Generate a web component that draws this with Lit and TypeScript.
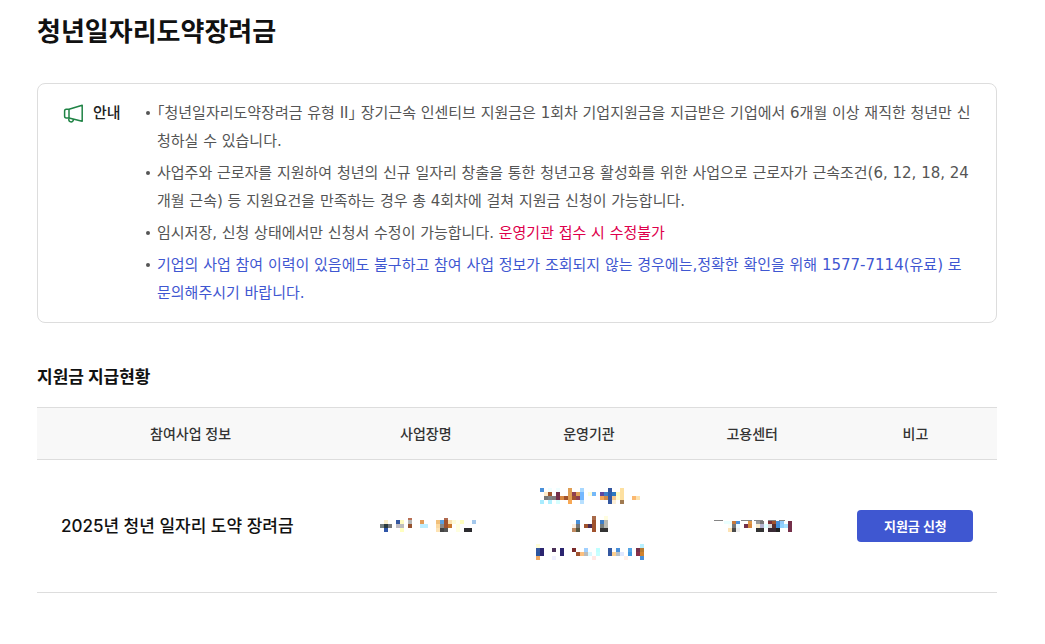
import { LitElement, html, svg, css } from "lit";
import { customElement, property } from "lit/decorators.js";

/** One strip of 4px tiles: top offset, tile height, then "column:colour" entries. */
type Strip = [top: number, height: number, tiles: string];

interface Mask {
  label: string;
  width: number;
  height: number;
  strips: Strip[];
  lines?: [x: number, width: number][];
}

const WORKPLACE: Mask = {
  label: "사업장명 비공개",
  width: 92,
  height: 22,
  strips: [
    [3, 3, "7:b87055 16:b06a50"],
    [5, 4, "1:fcefcb 4:3457a0 5:fdfbc0 7:b5b5b5 10:e09a57 14:f2c07a 15:5b9fe0 16:a0522d 17:fbe0b0 18:fdfbd8 19:fffff0 20:ffffc0 23:a4c8ec"],
    [9, 4, "0:777f7f 1:2b3a3f 2:777777 4:bdb9c0 5:bdbdbd 7:96532f 10:bdeeff 11:bdeeff 14:fbd9a0 15:888888 16:a0522d 17:c8772b 19:ffffe0"],
    [13, 4, "1:2f56a8 5:ffffc0 14:fde3b5 15:444444 16:555555 19:ffffe0 21:2b2b2f 22:2b2b2f"],
  ],
};

const AGENCY: Mask = {
  label: "운영기관 비공개",
  width: 106,
  height: 76,
  strips: [
    [0, 4, "1:4a90d9 3:f0feff 5:f0feff 8:e09f55 11:a8d8ff 18:3457a0 21:fde0a0"],
    [4, 4, "2:fdeccb 3:a0572d 5:74304a 8:e0a055 9:8f3f50 10:e0a055 11:74b8ff 13:fdfdd8 14:74b8f8 16:6048a0 17:3f7fc8 18:2b5fb0 19:2b78c0 20:fffbc0 21:fde0a0"],
    [8, 4, "2:777777 3:7f8487 4:807a7a 5:74304a 6:d98a45 7:a0522d 8:e0a055 9:a0522d 10:8f3f50 11:74b8ff 16:f5a555 17:d08a4a 18:3457a0 19:f5c890 20:fffbd0 21:fde0a0 24:fbb870 25:fde3b0"],
    [12, 4, "1:a8ecff 3:b0f0ff 5:d8ffff 8:f8a855 11:b8e0ff 18:3457a0 19:fdf0d8 21:a07a50"],
    [28, 4, "14:a86a4a 17:fffde0"],
    [32, 4, "10:4a90d9 14:a0522d 16:3f7fc8 17:bbbbb3"],
    [36, 4, "9:fdeddc 10:777777 12:a0522d 13:4a2a50 14:a0522d 16:777f7f 17:bbbbb3"],
    [40, 4, "9:c08a60 10:555540 14:a0522d 16:333333 17:333333"],
    [56, 4, "0:fffdd8 26:b8f0ff"],
    [60, 4, "0:3457a0 1:2b2570 4:4a3058 6:2b2570 9:7a2a2a 12:a0d0ff 15:c0ffff 18:3457a0 20:4a90d9 23:55a5e5 25:74304a 26:b87a30"],
    [64, 4, "0:2b56a0 1:2b2570 6:2b2570 10:a0522d 11:fbc080 12:bbbbbb 13:d8f8ff 15:c8ffff 18:3457a0 19:fdd090 20:b8c0c8 21:e0e8ff 23:3f98e0 25:8a3048 26:d0822d"],
    [68, 4, "0:f0a860 4:f0f0ff 14:ffe8e5 22:fff0ea 26:4a90d9"],
  ],
};

const CENTER: Mask = {
  label: "고용센터 비공개",
  width: 76,
  height: 22,
  lines: [[0, 9], [27, 11], [40, 9], [54, 8], [65, 6]],
  strips: [
    [6, 3, "2:eaffff 3:eaffff 4:c8783a 5:4a90d9 8:e09a4a 10:999999 11:777777 13:7a3038 14:a0522d 15:4a90d9 16:90c8f8 18:74304a"],
    [9, 4, "3:fbfff8 4:777777 5:eefaff 7:74304a 8:d8883a 10:fbeccd 11:b5b5d0 12:ddffff 13:d8d8d8 14:5a3030 15:3f90e0 16:90d0ff 17:a8e0ff 18:74304a"],
    [13, 4, "3:fde3b5 4:4a4a4a 5:eeeeee 10:333333 11:333333 13:3a2a35 14:3a2a35 15:222222 18:74304a"],
  ],
};

@customElement("masked-text")
export class MaskedText extends LitElement {
  @property({ attribute: false }) mask: Mask = WORKPLACE;

  static styles = css`
    :host {
      display: block;
    }
    .mask {
      display: block;
      margin: 0 auto;
      overflow: visible;
    }
  `;

  render() {
    const { label, width, height, strips, lines = [] } = this.mask;
    return html`
      <svg class="mask" role="img" aria-label=${label} width=${width} height=${height}
        viewBox="0 0 ${width} ${height}" shape-rendering="crispEdges">
        ${lines.map(([x, w]) => svg`<rect x=${x} y="5" width=${w} height="1" fill="#858585" />`)}
        ${strips.map(([top, h, tiles]) =>
          tiles.split(" ").map((tile) => {
            const [col, color] = tile.split(":");
            return svg`<rect x=${Number(col) * 4 + (lines.length ? 2 : 0)} y=${top} width="4" height=${h} fill=${"#" + color} />`;
          }),
        )}
      </svg>
    `;
  }
}

@customElement("app-root")
export class AppRoot extends LitElement {
  static styles = css`
    :host {
      display: block;
      box-sizing: border-box;
      padding: 10px 48px 48px 37px;
      background: #fff;
      color: #111;
      font-family: Inter, "Noto Sans CJK KR", sans-serif;
    }
    .title {
      margin: 0 0 29px;
      font-size: 26px;
      line-height: 44px;
      font-weight: 700;
    }
    .notice {
      display: flex;
      align-items: flex-start;
      padding: 15px 24px;
      border: 1px solid #ddd;
      border-radius: 8px;
      font-size: 15px;
      line-height: 28px;
    }
    .notice-title {
      display: flex;
      flex: 0 0 84px;
      align-items: center;
      gap: 8px;
      margin: 0;
      font-size: 15px;
      font-weight: 500;
      color: #222;
    }
    .list {
      display: grid;
      flex: 1;
      gap: 4px;
      margin: 0;
      padding: 0;
      list-style: none;
      color: #555;
      font-family: "DejaVu Sans", "Noto Sans CJK KR", sans-serif;
    }
    .item {
      display: flex;
    }
    .item::before {
      content: "";
      flex: none;
      width: 4px;
      height: 4px;
      margin: 12px 7px 0 0;
      border-radius: 50%;
      background: #555;
    }
    .danger {
      color: #de004c;
    }
    .info {
      color: #3f57d1;
    }
    .subtitle {
      margin: 40px 0 16px;
      font-size: 17px;
      line-height: 28px;
      font-weight: 700;
    }
    .table {
      width: 100%;
      table-layout: fixed;
      border-collapse: collapse;
      border-top: 1px solid #ddd;
    }
    .name-col {
      width: 32%;
    }
    .head {
      height: 52px;
      box-sizing: border-box;
      padding: 0;
      border-bottom: 1px solid #ddd;
      background: #f8f8f8;
      color: #333;
      font-size: 14px;
      line-height: 20px;
      font-weight: 500;
    }
    .cell {
      height: 133px;
      box-sizing: border-box;
      padding: 0;
      border-bottom: 1px solid #ddd;
      text-align: center;
    }
    .name {
      padding: 0 24px;
      text-align: left;
      font-size: 17px;
      line-height: 28px;
      font-weight: 500;
    }
    .apply {
      width: 116px;
      height: 32px;
      padding: 0;
      border: 0;
      border-radius: 4px;
      background: #3f57d1;
      color: #fff;
      font: 700 13px/20px Inter, "Noto Sans CJK KR", sans-serif;
      vertical-align: middle;
      cursor: pointer;
    }
  `;

  render() {
    return html`
      <h1 class="title">청년일자리도약장려금</h1>
      <section class="notice" aria-labelledby="notice">
        <h2 class="notice-title" id="notice">
          <svg width="23" height="22" viewBox="0 0 23 22" fill="none" stroke="#1f8345" stroke-width="1.5" stroke-linejoin="round" aria-hidden="true">
            <path d="M7 7.2 20.2 3.3v16L7 16H4.2Q2.6 16 2.6 14V9.2Q2.6 7.2 4.2 7.2Z" />
            <path d="M7 7.2V16M6.8 16.4v1.2a2.3 2.3 0 0 0 4.6 0V17" />
          </svg>
          안내
        </h2>
        <ul class="list">
          <li class="item"><span>｢청년일자리도약장려금 유형 II｣ 장기근속 인센티브 지원금은 1회차 기업지원금을 지급받은 기업에서 6개월 이상 재직한 청년만 신청하실 수 있습니다.</span></li>
          <li class="item"><span>사업주와 근로자를 지원하여 청년의 신규 일자리 창출을 통한 청년고용 활성화를 위한 사업으로 근로자가 근속조건(6, 12, 18, 24개월 근속) 등 지원요건을 만족하는 경우 총 4회차에 걸쳐 지원금 신청이 가능합니다.</span></li>
          <li class="item"><span>임시저장, 신청 상태에서만 신청서 수정이 가능합니다. <span class="danger">운영기관 접수 시 수정불가</span></span></li>
          <li class="item"><span class="info">기업의 사업 참여 이력이 있음에도 불구하고 참여 사업 정보가 조회되지 않는 경우에는,정확한 확인을 위해 1577-7114(유료) 로 문의해주시기 바랍니다.</span></li>
        </ul>
      </section>

      <h2 class="subtitle" id="status">지원금 지급현황</h2>
      <table class="table" aria-labelledby="status">
        <thead>
          <tr>
            <th class="head name-col" scope="col">참여사업 정보</th>
            <th class="head" scope="col">사업장명</th>
            <th class="head" scope="col">운영기관</th>
            <th class="head" scope="col">고용센터</th>
            <th class="head" scope="col">비고</th>
          </tr>
        </thead>
        <tbody>
          <tr>
            <td class="cell name">2025년 청년 일자리 도약 장려금</td>
            <td class="cell"><masked-text .mask=${WORKPLACE}></masked-text></td>
            <td class="cell"><masked-text .mask=${AGENCY}></masked-text></td>
            <td class="cell"><masked-text .mask=${CENTER}></masked-text></td>
            <td class="cell"><button class="apply" type="button">지원금 신청</button></td>
          </tr>
        </tbody>
      </table>
    `;
  }
}
